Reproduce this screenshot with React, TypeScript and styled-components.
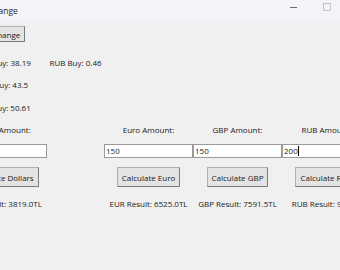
import React from "react";
import styled, { createGlobalStyle } from "styled-components";

const GlobalStyle = createGlobalStyle`
  html, body {
    margin: 0;
    padding: 0;
    background: #f0f0f0;
    overflow: hidden;
  }
  body {
    font-family: "Open Sans", "Noto Sans", sans-serif;
  }
`;

const Window = styled.div`
  width: 340px;
  height: 270px;
  overflow: hidden;
  background: #f0f0f0;
  color: #1a1a1a;
  font-size: 8px;
`;

const TitleBar = styled.div`
  height: 21px;
  background: #f3f4f7;
  display: flex;
  align-items: center;
  overflow: hidden;
`;

const Title = styled.span`
  margin-left: -58px;
  width: 310px;
  flex: none;
  font-size: 8.5px;
  color: #2a2a2a;
  white-space: nowrap;
`;

const Controls = styled.div`
  flex: none;
  display: flex;
  align-items: center;
  gap: 26px;
  margin-left: 38px;
`;

const Minimize = styled.div`
  width: 7px;
  height: 1px;
  background: #6a6a6a;
  margin-top: -6px;
`;

const Maximize = styled.div`
  width: 6px;
  height: 6px;
  border: 1px solid #c4c4c4;
  margin-top: -7px;
`;

const Body = styled.div`
  margin-left: -42px;
  display: flex;
  flex-direction: column;
`;

const Row = styled.div<{ $top: number; $h: number }>`
  display: grid;
  grid-template-columns: 89px 57px 89px 89px 89px;
  margin-top: ${({ $top }) => $top}px;
  height: ${({ $h }) => $h}px;
  align-items: center;
  justify-items: center;
`;

const Label = styled.span<{ $col?: number }>`
  grid-column: ${({ $col }) => ($col ?? 0) + 1};
  white-space: nowrap;
  line-height: 14px;
`;

const Entry = styled.div<{ $col: number }>`
  grid-column: ${({ $col }) => $col + 1};
  justify-self: stretch;
  height: 14px;
  box-sizing: border-box;
  background: #ffffff;
  border: 1px solid #9a9a9a;
  display: flex;
  align-items: center;
  padding-left: 1px;
  line-height: 12px;
`;

const Caret = styled.span`
  display: inline-block;
  width: 1px;
  height: 10px;
  background: #000;
`;

const Button = styled.button<{ $col: number; $h?: number }>`
  grid-column: ${({ $col }) => $col + 1};
  height: ${({ $h }) => $h ?? 20}px;
  box-sizing: border-box;
  padding: 0 4px;
  font: inherit;
  color: #1a1a1a;
  background: #e3e3e3;
  border: 1px solid #b0b0b0;
  border-right-color: #7a7a7a;
  border-bottom-color: #7a7a7a;
  border-radius: 0;
  white-space: nowrap;
`;

const App = () => {
  return (
    <>
      <GlobalStyle />
      <Window>
        <TitleBar>
          <Title>Currency Exchange</Title>
          <Controls>
            <Minimize />
            <Maximize />
          </Controls>
        </TitleBar>
        <Body>
          <Row $top={5} $h={16}>
            <Button $col={0} $h={16}>Exchange</Button>
          </Row>
          <Row $top={14} $h={14}>
            <Label>USD Buy: 38.19</Label>
            <Label $col={1}>RUB Buy: 0.46</Label>
          </Row>
          <Row $top={8} $h={14}>
            <Label>EUR Buy: 43.5</Label>
          </Row>
          <Row $top={9} $h={14}>
            <Label>GBP Buy: 50.61</Label>
          </Row>
          <Row $top={8} $h={14}>
            <Label>Dollar Amount:</Label>
            <Label $col={2}>Euro Amount:</Label>
            <Label $col={3}>GBP Amount:</Label>
            <Label $col={4}>RUB Amount:</Label>
          </Row>
          <Row $top={7} $h={14}>
            <Entry $col={0} />
            <Entry $col={2}>150</Entry>
            <Entry $col={3}>150</Entry>
            <Entry $col={4}>
              200
              <Caret />
            </Entry>
          </Row>
          <Row $top={9} $h={20}>
            <Button $col={0}>Calculate Dollars</Button>
            <Button $col={2}>Calculate Euro</Button>
            <Button $col={3}>Calculate GBP</Button>
            <Button $col={4}>Calculate RUB</Button>
          </Row>
          <Row $top={10} $h={14}>
            <Label>USD Result: 3819.0TL</Label>
            <Label $col={2}>EUR Result: 6525.0TL</Label>
            <Label $col={3}>GBP Result: 7591.5TL</Label>
            <Label $col={4}>RUB Result: 92.0TL</Label>
          </Row>
        </Body>
      </Window>
    </>
  );
};

export default App;
